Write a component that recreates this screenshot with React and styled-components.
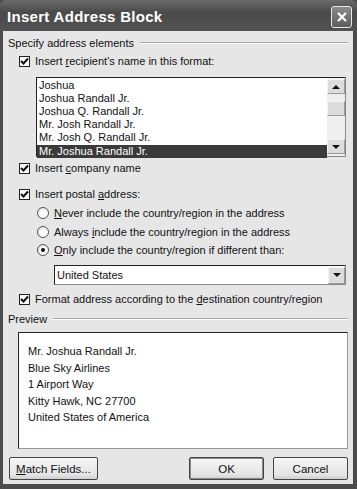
import styled, { createGlobalStyle } from "styled-components";

const GlobalStyle = createGlobalStyle`
  html, body {
    margin: 0;
    padding: 0;
    background: #3a3a3a;
  }
  body {
    font-family: "Liberation Sans", Arial, sans-serif;
    font-size: 11px;
    color: #111;
  }
`;

const Window = styled.div`
  width: 357px;
  height: 489px;
  box-sizing: border-box;
  background: #4c4c4c;
  padding: 0 4px 5px 3px;
  display: flex;
  flex-direction: column;
`;

const TitleBar = styled.div`
  height: 31px;
  margin: 0 -4px 0 -3px;
  padding: 0 5px 0 7px;
  display: flex;
  align-items: center;
  justify-content: space-between;
  background: linear-gradient(#6a6a6a, #4a4a4a 40%, #525252);
  border-radius: 6px 6px 0 0;
`;

const Title = styled.span`
  color: #fff;
  font-weight: bold;
  font-size: 15px;
  letter-spacing: 0.3px;
  margin-top: 2px;
`;

const CloseButton = styled.div`
  width: 21px;
  height: 22px;
  box-sizing: border-box;
  border: 1px solid #e8e8e8;
  border-radius: 3px;
  background: linear-gradient(#8a8a8a, #5c5c5c);
  display: flex;
  align-items: center;
  justify-content: center;
  margin-top: 2px;
`;

const Body = styled.div`
  flex: 1;
  background: #e6e6e6;
  padding: 0 5px;
  display: flex;
  flex-direction: column;
`;

const Heading = styled.div`
  display: flex;
  align-items: center;
  height: 14px;
  margin-top: ${(p) => p.$top}px;
  &::after {
    content: "";
    flex: 1;
    margin-left: 6px;
    border-top: 1px solid #a8a8a8;
    border-bottom: 1px solid #fff;
  }
`;

const Row = styled.label`
  display: flex;
  align-items: center;
  height: 14px;
  margin-top: ${(p) => p.$top}px;
  margin-left: ${(p) => p.$indent}px;
  gap: 5px;
  white-space: nowrap;
`;

const Box = styled.span`
  width: 11px;
  height: 11px;
  box-sizing: border-box;
  border: 1px solid #222;
  background: #fafafa;
  display: inline-flex;
  align-items: center;
  justify-content: center;
  flex: none;
`;

const Radio = styled.span`
  width: 12px;
  height: 12px;
  box-sizing: border-box;
  border-radius: 50%;
  border: 1px solid #555;
  background: radial-gradient(circle at 65% 65%, #fff 40%, #d0d0d0);
  display: inline-flex;
  align-items: center;
  justify-content: center;
  flex: none;
  &::after {
    content: "";
    width: 4px;
    height: 4px;
    border-radius: 50%;
    background: ${(p) => (p.$on ? "#111" : "transparent")};
  }
`;

const U = styled.span`
  text-decoration: underline;
`;

const ListBox = styled.div`
  margin: 9px 2px 0 28px;
  height: 80px;
  box-sizing: border-box;
  border: 1px solid #222;
  border-right-color: #888;
  border-bottom-color: #888;
  background: #fff;
  display: flex;
`;

const Items = styled.div`
  flex: 1;
  padding-top: 1px;
`;

const Item = styled.div`
  height: 13px;
  line-height: 13px;
  padding-left: 2px;
  background: ${(p) => (p.$sel ? "#3a3a3a" : "transparent")};
  color: ${(p) => (p.$sel ? "#fff" : "#111")};
  margin-top: ${(p) => (p.$sel ? 1 : 0)}px;
`;

const ScrollBar = styled.div`
  width: 18px;
  background: #eeeeee;
  display: flex;
  flex-direction: column;
  padding: 1px 0;
  box-sizing: border-box;
`;

const ScrollBtn = styled.div`
  height: 15px;
  box-sizing: border-box;
  border: 1px solid #9a9a9a;
  border-left-color: #f4f4f4;
  border-top-color: #f4f4f4;
  background: #dcdcdc;
  display: flex;
  align-items: center;
  justify-content: center;
  margin-top: ${(p) => p.$top || 0}px;
`;

const Arrow = styled.span`
  width: 0;
  height: 0;
  border-left: 4px solid transparent;
  border-right: 4px solid transparent;
  ${(p) =>
    p.$down
      ? "border-top: 4px solid #111;"
      : "border-bottom: 4px solid #111;"}
`;

const Select = styled.div`
  margin: 8px 2px 0 46px;
  height: 20px;
  box-sizing: border-box;
  border: 1px solid #222;
  border-right-color: #888;
  border-bottom-color: #888;
  background: #fff;
  display: flex;
  align-items: center;
  padding-left: 2px;
  justify-content: space-between;
`;

const SelectBtn = styled(ScrollBtn)`
  width: 17px;
  height: 17px;
`;

const Preview = styled.div`
  margin: 6px 0 0 10px;
  height: 117px;
  box-sizing: border-box;
  border: 1px solid #222;
  border-right-color: #999;
  border-bottom-color: #999;
  background: #fff;
  padding: 10px 0 0 9px;
`;

const PreviewLine = styled.div`
  height: 16.6px;
  line-height: 16px;
`;

const Buttons = styled.div`
  display: flex;
  margin-top: 8px;
  padding-left: 1px;
`;

const Button = styled.div`
  width: ${(p) => p.$w}px;
  height: 23px;
  box-sizing: border-box;
  margin-left: ${(p) => p.$left || 0}px;
  border: 1px solid #444;
  border-radius: 2px;
  background: linear-gradient(#f6f6f6, #e4e4e4 80%, #cfcfcf);
  box-shadow: ${(p) => (p.$def ? "inset 0 0 0 1px #8a8a8a" : "none")};
  display: flex;
  align-items: center;
  justify-content: center;
  font-size: 11.5px;
`;

const names = [
  "Joshua",
  "Joshua Randall Jr.",
  "Joshua Q. Randall Jr.",
  "Mr. Josh Randall Jr.",
  "Mr. Josh Q. Randall Jr.",
];

const Check = () => (
  <svg width="9" height="9" viewBox="0 0 9 9">
    <path d="M1 4 L3.5 6.5 L8 1.5" stroke="#111" strokeWidth="2" fill="none" />
  </svg>
);

const App = () => (
  <>
    <GlobalStyle />
    <Window>
      <TitleBar>
        <Title>Insert Address Block</Title>
        <CloseButton>
          <svg width="12" height="12" viewBox="0 0 12 12">
            <path d="M2 2 L10 10 M10 2 L2 10" stroke="#fff" strokeWidth="2.2" />
          </svg>
        </CloseButton>
      </TitleBar>
      <Body>
        <Heading $top={5}>Specify address elements</Heading>
        <Row $top={4} $indent={11}>
          <Box><Check /></Box>
          <span>Insert <U>r</U>ecipient's name in this format:</span>
        </Row>
        <ListBox>
          <Items>
            {names.map((n) => (
              <Item key={n}>{n}</Item>
            ))}
            <Item $sel>Mr. Joshua Randall Jr.</Item>
          </Items>
          <ScrollBar>
            <ScrollBtn><Arrow /></ScrollBtn>
            <ScrollBtn $top={7} />
            <ScrollBtn $top={23}><Arrow $down /></ScrollBtn>
          </ScrollBar>
        </ListBox>
        <Row $top={4} $indent={11}>
          <Box><Check /></Box>
          <span>Insert <U>c</U>ompany name</span>
        </Row>
        <Row $top={12} $indent={11}>
          <Box><Check /></Box>
          <span>Insert postal <U>a</U>ddress:</span>
        </Row>
        <Row $top={5} $indent={29}>
          <Radio />
          <span><U>N</U>ever include the country/region in the address</span>
        </Row>
        <Row $top={5} $indent={29}>
          <Radio />
          <span>Always <U>i</U>nclude the country/region in the address</span>
        </Row>
        <Row $top={4} $indent={29}>
          <Radio $on />
          <span><U>O</U>nly include the country/region if different than:</span>
        </Row>
        <Select>
          <span>United States</span>
          <SelectBtn><Arrow $down /></SelectBtn>
        </Select>
        <Row $top={7} $indent={11}>
          <Box><Check /></Box>
          <span>Format address according to the <U>d</U>estination country/region</span>
        </Row>
        <Heading $top={6}>Preview</Heading>
        <Preview>
          <PreviewLine>Mr. Joshua Randall Jr.</PreviewLine>
          <PreviewLine>Blue Sky Airlines</PreviewLine>
          <PreviewLine>1 Airport Way</PreviewLine>
          <PreviewLine>Kitty Hawk, NC 27700</PreviewLine>
          <PreviewLine>United States of America</PreviewLine>
        </Preview>
        <Buttons>
          <Button $w={89}><span><U>M</U>atch Fields...</span></Button>
          <Button $w={75} $left={91} $def>OK</Button>
          <Button $w={75} $left={9}>Cancel</Button>
        </Buttons>
      </Body>
    </Window>
  </>
);

export default App;
